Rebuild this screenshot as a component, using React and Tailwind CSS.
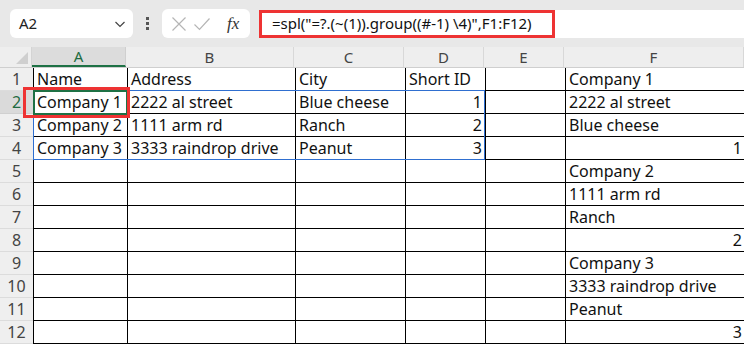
import React from "react";

const cols = [
  { key: "A", w: 94 },
  { key: "B", w: 168 },
  { key: "C", w: 110 },
  { key: "D", w: 80 },
  { key: "E", w: 80 },
  { key: "F", w: 180 },
];

// each row: values for A..F, numbers right aligned
const rows = [
  ["Name", "Address", "City", "Short ID", "", "Company 1"],
  ["Company 1", "2222 al street", "Blue cheese", 1, "", "2222 al street"],
  ["Company 2", "1111 arm rd", "Ranch", 2, "", "Blue cheese"],
  ["Company 3", "3333 raindrop drive", "Peanut", 3, "", 1],
  ["", "", "", "", "", "Company 2"],
  ["", "", "", "", "", "1111 arm rd"],
  ["", "", "", "", "", "Ranch"],
  ["", "", "", "", "", 2],
  ["", "", "", "", "", "Company 3"],
  ["", "", "", "", "", "3333 raindrop drive"],
  ["", "", "", "", "", "Peanut"],
  ["", "", "", "", "", 3],
];

const font = { fontFamily: '"Noto Sans", "Liberation Sans", sans-serif' };

const App = () => {
  return (
    <div className="w-[744px] h-[346px] overflow-hidden bg-white relative" style={font}>
      {/* toolbar */}
      <div className="h-[47px] bg-[#e8e8e8] flex items-center">
        <div className="ml-[10px] w-[123px] h-[29px] bg-white rounded-md flex items-center justify-between pl-[9px] pr-[6px]">
          <span className="text-[15px] text-[#222]">A2</span>
          <svg width="14" height="14" viewBox="0 0 14 14" fill="none" stroke="#444" strokeWidth="1.2">
            <path d="M2.5 5 L7 9.5 L11.5 5" />
          </svg>
        </div>
        <div className="w-[29px] flex flex-col items-center gap-[2px]">
          <span className="w-[3px] h-[3px] bg-[#555]" />
          <span className="w-[3px] h-[3px] bg-[#555]" />
          <span className="w-[3px] h-[3px] bg-[#555]" />
        </div>
        <div className="w-[88px] h-[29px] bg-white rounded-md flex items-center pl-[9px]">
          <svg width="16" height="16" viewBox="0 0 16 16" stroke="#b5b5b5" strokeWidth="1.2" fill="none">
            <path d="M1.5 1.5 L14.5 14.5 M14.5 1.5 L1.5 14.5" />
          </svg>
          <svg className="ml-[6px]" width="18" height="16" viewBox="0 0 18 16" stroke="#b5b5b5" strokeWidth="1.2" fill="none">
            <path d="M1.5 8.5 L6.5 13.5 L16.5 2.5" />
          </svg>
          <span className="ml-[16px] text-[17px] italic text-[#333]" style={{ fontFamily: '"Liberation Serif", serif' }}>
            fx
          </span>
        </div>
        <div className="ml-[9px] flex-1 h-[28px] bg-white flex items-center">
          <div className="h-[28px] w-[296px] border-[3px] border-[#ee3333] flex items-center pl-[10px] text-[15px] text-[#111] whitespace-nowrap">
            =spl("=?.(~(1)).group((#-1) \4)",F1:F12)
          </div>
        </div>
      </div>

      {/* column header row */}
      <div className="flex h-[21px] bg-[#eeeeee] border-b border-[#cfcfcf]">
        <div className="w-[33px] relative border-r border-[#d4d4d4]">
          <svg className="absolute right-[3px] bottom-[3px]" width="12" height="12" viewBox="0 0 12 12">
            <path d="M12 0 L12 12 L0 12 Z" fill="#cfcfcf" />
          </svg>
        </div>
        {cols.map((c) => (
          <div
            key={c.key}
            style={{ width: c.w }}
            className={
              c.key === "A"
                ? "shrink-0 flex items-center justify-center text-[15px] text-[#1e6b41] bg-[#dcdcdc] border-r border-[#cfcfcf] border-b-2 border-b-[#1e7145]"
                : "shrink-0 flex items-center justify-center text-[15px] text-[#444] border-r border-[#d8d8d8]"
            }
          >
            {c.key}
          </div>
        ))}
      </div>

      {/* rows */}
      {rows.map((r, i) => (
        <div key={i} className="flex h-[23px]">
          <div
            className={
              i === 1
                ? "w-[33px] shrink-0 flex items-end justify-center text-[16px] leading-[22px] text-[#1e6b41] bg-[#dadada] border-b border-[#d0d0d0]"
                : "w-[33px] shrink-0 flex items-end justify-center text-[16px] leading-[22px] text-[#444] bg-[#efefef] border-b border-[#dcdcdc]"
            }
          >
            {i + 1}
          </div>
          {cols.map((c, j) => (
            <div
              key={c.key}
              style={{ width: c.w }}
              className={
                "shrink-0 border-l border-b border-black flex items-end px-[3px] text-[16px] leading-[22px] text-[#111] whitespace-nowrap overflow-hidden " +
                (typeof r[j] === "number" ? "justify-end" : "justify-start")
              }
            >
              {r[j]}
            </div>
          ))}
        </div>
      ))}

      {/* referenced range A2:D4 */}
      <div className="absolute left-[33px] top-[90px] w-[452px] h-[70px] border border-[#2f6fd0] pointer-events-none" />
      {/* active cell A2 */}
      <div className="absolute left-[33px] top-[90px] w-[95px] h-[25px] border-2 border-[#1e7145]" />
      {/* red highlight around A2 */}
      <div className="absolute left-[23px] top-[87px] w-[107px] h-[31px] border-[3px] border-[#ee3333]" />
    </div>
  );
};

export default App;
